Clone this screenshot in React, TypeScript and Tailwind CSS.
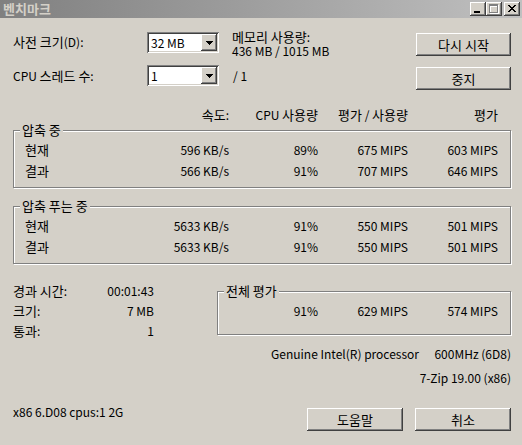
import React from "react";

// Windows classic 3D edges
const raised =
  "bg-[#d4d0c8] shadow-[inset_-1px_-1px_#404040,inset_1px_1px_#ffffff,inset_-2px_-2px_#808080,inset_2px_2px_#d4d0c8]";
const sunken =
  "shadow-[inset_1px_1px_#808080,inset_-1px_-1px_#ffffff,inset_2px_2px_#404040,inset_-2px_-2px_#d4d0c8]";

// Gulim draws Hangul a bit larger than its Latin; bump Hangul runs
function T({ s }: { s: string }) {
  const parts = s.split(/([\uAC00-\uD7A3]+(?: [\uAC00-\uD7A3]+)*)/);
  return (
    <>
      {parts.map((p, i) =>
        /[\uAC00-\uD7A3]/.test(p) ? (
          <span key={i} className="text-[13px]">
            {p}
          </span>
        ) : (
          p
        )
      )}
    </>
  );
}

function PushButton({ label, className = "" }: { label: string; className?: string }) {
  return (
    <div className={`${raised} flex h-[23px] w-[95px] items-center justify-center leading-[14px] ${className}`}>
      <T s={label} />
    </div>
  );
}

function Combo({ value }: { value: string }) {
  return (
    <div className={`${sunken} flex h-[21px] w-[72px] bg-white p-[2px]`}>
      <span className="flex-1 pl-[2px] leading-[17px]">{value}</span>
      <div className={`${raised} flex w-[16px] items-center justify-center`}>
        <svg width="7" height="4" viewBox="0 0 7 4" shapeRendering="crispEdges">
          <path d="M0 0h7v1h-1v1h-1v1h-1v1h-1v-1h-1v-1h-1v-1h-1z" fill="#000" />
        </svg>
      </div>
    </div>
  );
}

function Group({ title, className = "", children }: { title: string; className?: string; children: React.ReactNode }) {
  return (
    <div className={`relative border border-[#808080] shadow-[inset_1px_1px_#ffffff,1px_1px_#ffffff] ${className}`}>
      <span className="absolute left-[6px] top-[-8px] bg-[#d4d0c8] px-[2px] leading-[14px]">
        <T s={title} />
      </span>
      {children}
    </div>
  );
}

function Row({ label, speed, cpu, ratingUsage, rating }: { label: string; speed: string; cpu: string; ratingUsage: string; rating: string }) {
  return (
    <div className="grid grid-cols-[215px_89px_90px_90px] leading-[14px]">
      <div className="flex justify-between pl-[11px]">
        <T s={label} />
        <span>{speed}</span>
      </div>
      <span className="text-right">{cpu}</span>
      <span className="text-right">{ratingUsage}</span>
      <span className="text-right">{rating}</span>
    </div>
  );
}

function Stat({ label, value }: { label: string; value: string }) {
  return (
    <div className="flex justify-between">
      <span>
        <T s={label} />
      </span>
      <span>{value}</span>
    </div>
  );
}

function TitleButton({ children, className = "" }: { children: React.ReactNode; className?: string }) {
  return <div className={`${raised} h-[14px] w-[16px] ${className}`}>{children}</div>;
}

export default function App() {
  return (
    <div className="h-[445px] w-[522px] overflow-hidden bg-[#d4d0c8] font-['Noto_Sans_CJK_KR',sans-serif] text-[12px] text-black">
      {/* title bar (inactive) */}
      <div className="flex h-[18px] items-start justify-between bg-gradient-to-r from-[#808080] to-[#c0c0c0]">
        <span className="pl-[3px] text-[13px] font-bold leading-[17px] text-[#d4d0c8]">벤치마크</span>
        <div className="mt-[2px] flex pr-[2px]">
          <TitleButton>
            <svg width="16" height="14" shapeRendering="crispEdges">
              <rect x="4" y="9" width="6" height="2" fill="#000" />
            </svg>
          </TitleButton>
          <TitleButton>
            <svg width="16" height="14" shapeRendering="crispEdges">
              <path d="M4 3h9v9h-9z M5 5h7v6h-7z" fill="#ffffff" fillRule="evenodd" />
              <path d="M3 2h9v9h-9z M4 4h7v6h-7z" fill="#808080" fillRule="evenodd" />
            </svg>
          </TitleButton>
          <TitleButton className="ml-[2px]">
            <svg width="16" height="14" shapeRendering="crispEdges">
              <path
                d="M4 3h2v1h1v1h2v-1h1v-1h2v1h-1v1h-1v1h-1v1h1v1h1v1h1v1h-2v-1h-1v-1h-2v1h-1v1h-2v-1h1v-1h1v-1h1v-1h-1v-1h-1v-1h-1z"
                fill="#000"
              />
            </svg>
          </TitleButton>
        </div>
      </div>

      <div className="flex flex-col pl-[13px] pr-[11px]">
        {/* dictionary / threads */}
        <div className="mt-[14px] grid grid-cols-[134px_72px_13px_184px_95px] grid-rows-[33px_auto] items-start">
          <span className="mt-[3px] leading-[14px]">
            <T s="사전 크기(D):" />
          </span>
          <Combo value="32 MB" />
          <span />
          <div className="mt-[-2px] flex flex-col leading-[14px]">
            <span>
              <T s="메모리 사용량:" />
            </span>
            <span>436 MB / 1015 MB</span>
          </div>
          <PushButton label="다시 시작" className="mt-[1px]" />

          <span className="mt-[4px] leading-[14px]">
            <T s="CPU 스레드 수:" />
          </span>
          <Combo value="1" />
          <span />
          <span className="mt-[4px] pl-px leading-[14px]">/ 1</span>
          <PushButton label="중지" className="mt-[2px]" />
        </div>

        {/* column headers */}
        <div className="mt-[18px] grid grid-cols-[216px_89px_90px_90px] text-right leading-[14px]">
          <span>
            <T s="속도:" />
          </span>
          <span>
            <T s="CPU 사용량" />
          </span>
          <span>
            <T s="평가 / 사용량" />
          </span>
          <span>
            <T s="평가" />
          </span>
        </div>

        <Group title="압축 중" className="mt-[8px] flex flex-col gap-[7px] pb-[9px] pt-[12px]">
          <Row label="현재" speed="596 KB/s" cpu="89%" ratingUsage="675 MIPS" rating="603 MIPS" />
          <Row label="결과" speed="566 KB/s" cpu="91%" ratingUsage="707 MIPS" rating="646 MIPS" />
        </Group>

        <Group title="압축 푸는 중" className="mt-[18px] flex flex-col gap-[7px] pb-[9px] pt-[12px]">
          <Row label="현재" speed="5633 KB/s" cpu="91%" ratingUsage="550 MIPS" rating="501 MIPS" />
          <Row label="결과" speed="5633 KB/s" cpu="91%" ratingUsage="550 MIPS" rating="501 MIPS" />
        </Group>

        {/* elapsed / totals */}
        <div className="flex h-[76px] items-start">
          <div className="mt-[20px] flex w-[141px] flex-col gap-[6px] leading-[14px]">
            <Stat label="경과 시간:" value="00:01:43" />
            <Stat label="크기:" value="7 MB" />
            <Stat label="통과:" value="1" />
          </div>
          <Group title="전체 평가" className="ml-[63px] mt-[27px] w-[294px] pb-[16px] pt-[12px]">
            <div className="grid grid-cols-[100px_90px_90px] text-right leading-[14px]">
              <span>91%</span>
              <span>629 MIPS</span>
              <span>574 MIPS</span>
            </div>
          </Group>
        </div>

        <div className="mt-[7px] flex justify-between pl-[258px] leading-[14px]">
          <span>Genuine Intel(R) processor</span>
          <span>600MHz (6D8)</span>
        </div>
        <div className="mt-[10px] text-right leading-[14px]">7-Zip 19.00 (x86)</div>

        <div className="mt-[20px] flex items-start">
          <span className="flex-1 leading-[14px]">x86 6.D08 cpus:1 2G</span>
          <PushButton label="도움말" className="mt-[3px] w-[96px]" />
          <PushButton label="취소" className="ml-[12px] mt-[3px] w-[96px]" />
        </div>
      </div>
    </div>
  );
}
